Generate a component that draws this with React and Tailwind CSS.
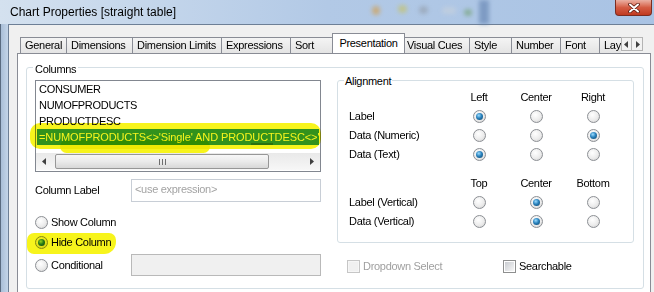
import React from "react";

const tabs = [
  { name: "General", w: "w-[47px]" },
  { name: "Dimensions", w: "w-[67px]" },
  { name: "Dimension Limits", w: "w-[90px]" },
  { name: "Expressions", w: "w-[70px]" },
  { name: "Sort", w: "w-[44px]" },
  { name: "Presentation", w: "w-[69px]", active: true },
  { name: "Visual Cues", w: "w-[68px]" },
  { name: "Style", w: "w-[43px]" },
  { name: "Number", w: "w-[50px]" },
  { name: "Font", w: "w-[40px]" },
  { name: "Layout", w: "w-[50px]" },
];

function Radio({ on }) {
  return (
    <span className="flex h-[13px] w-[13px] shrink-0 items-center justify-center rounded-full border border-[#8c8f94] bg-[radial-gradient(circle_at_40%_35%,#ffffff_0%,#ececec_55%,#cdcdcd_100%)]">
      {on && (
        <span className="h-[7px] w-[7px] rounded-full bg-[radial-gradient(circle_at_40%_35%,#9bdcff_0%,#2a82bd_45%,#0b3f63_100%)]" />
      )}
    </span>
  );
}

function Check({ disabled }) {
  return (
    <span
      className={
        disabled
          ? "flex h-[13px] w-[13px] shrink-0 items-center justify-center border border-[#c6c6c6] bg-[#f6f6f6]"
          : "flex h-[13px] w-[13px] shrink-0 items-center justify-center border border-[#8e8f8f] bg-white"
      }
    >
      <span
        className={
          disabled
            ? "h-[9px] w-[9px] bg-[#f0f0f0]"
            : "h-[9px] w-[9px] bg-gradient-to-br from-[#c9ccd1] to-[#f7f7f7]"
        }
      />
    </span>
  );
}

function Arrow({ dir }) {
  return (
    <svg width="5" height="7" viewBox="0 0 5 7">
      {dir === "left" ? <path d="M4 0 L0 3.5 L4 7 Z" fill="#404040" /> : <path d="M1 0 L5 3.5 L1 7 Z" fill="#404040" />}
    </svg>
  );
}

function TitleBar() {
  return (
    <div className="relative flex h-[24px] items-center bg-gradient-to-r from-[#d4e1ef] via-[#b2c9e6] to-[#a9c3e4] pl-[10px] text-[12px] tracking-normal">
      <span className="relative z-10">Chart Properties [straight table]</span>
      {/* blurred desktop behind the glass */}
      <span className="absolute left-[372px] top-[6px] h-[9px] w-[8px] rounded-full bg-[#d79a3c] opacity-60 blur-[2px]" />
      <span className="absolute left-[398px] top-[5px] h-[8px] w-[9px] rounded-full bg-[#c8c25a] opacity-60 blur-[2px]" />
      <span className="absolute left-[419px] top-[6px] h-[8px] w-[9px] rounded-full bg-[#8c939c] opacity-50 blur-[2px]" />
      <span className="absolute left-[442px] top-[7px] h-[7px] w-[14px] rounded-full bg-[#c9d2dc] opacity-60 blur-[2px]" />
      <span className="absolute left-[464px] top-[9px] h-[7px] w-[8px] rounded-full bg-[#6f9f6a] opacity-60 blur-[2px]" />
      <span className="absolute left-[479px] top-0 h-[24px] w-[10px] bg-[#5f7fae] opacity-60 blur-[2px]" />
      {/* close button */}
      <div className="absolute right-[2px] top-0 flex h-[16px] w-[37px] items-center justify-center rounded-b-[4px] border border-t-0 border-[#7b2c20] bg-gradient-to-b from-[#eab0a3] via-[#d45c43] to-[#c0391f]">
        <svg width="12" height="10" viewBox="0 0 12 10">
          <path d="M2 1.5 L10 8.5 M10 1.5 L2 8.5" stroke="#5a1a10" strokeWidth="3.6" strokeLinecap="round" />
          <path d="M2 1.5 L10 8.5 M10 1.5 L2 8.5" stroke="#ffffff" strokeWidth="2" strokeLinecap="round" />
        </svg>
      </div>
    </div>
  );
}

function Tabs() {
  return (
    <div className="flex h-[20px] w-[634px] items-end">
      <div className="flex h-[20px] w-[604px] items-end overflow-hidden pl-[4px]">
        {tabs.map((t) =>
          t.active ? (
            <div
              key={t.name}
              className="relative z-10 -mx-[2px] mb-[-1px] flex h-[21px] w-[73px] shrink-0 items-center justify-center border border-b-0 border-[#898c95] bg-white pb-[2px]"
            >
              {t.name}
            </div>
          ) : (
            <div
              key={t.name}
              className={`-ml-px flex h-[16px] shrink-0 items-center border border-b-0 border-[#898c95] bg-gradient-to-b from-[#f4f4f4] to-[#e4e4e4] pl-[4px] ${t.w}`}
            >
              {t.name}
            </div>
          )
        )}
      </div>
      <div className="mb-[2px] flex h-[14px]">
        <div className="flex w-[11px] items-center justify-center border border-[#b4b4b4] bg-[#f2f2f2]">
          <Arrow dir="left" />
        </div>
        <div className="flex w-[11px] items-center justify-center border border-l-0 border-[#b4b4b4] bg-[#f2f2f2]">
          <Arrow dir="right" />
        </div>
      </div>
    </div>
  );
}

function ListBox() {
  return (
    <div className="flex h-[92px] flex-col border border-[#828790] bg-white">
      <div className="h-[16px] pl-[3px] leading-[16px]">CONSUMER</div>
      <div className="h-[16px] pl-[3px] leading-[16px]">NUMOFPRODUCTS</div>
      <div className="h-[16px] pl-[3px] leading-[16px]">PRODUCTDESC</div>
      <div className="relative mx-[1px] h-[16px] overflow-hidden whitespace-nowrap bg-[#3399ff] pl-[2px] leading-[16px] tracking-[-0.1px] text-white">
        =NUMOFPRODUCTS&lt;&gt;'Single' AND PRODUCTDESC&lt;&gt;'
        <span className="absolute left-[214px] top-[14px] h-[2px] w-[22px] bg-[#2b7686]" />
      </div>
      <div className="h-[8px]" />
      <div className="flex h-[17px] items-center bg-gradient-to-b from-[#e9e9e9] to-[#f7f7f7]">
        <div className="flex h-[17px] w-[17px] items-center justify-center">
          <Arrow dir="left" />
        </div>
        <div className="ml-[2px] flex h-[15px] w-[214px] items-center justify-center gap-[2px] rounded-[2px] border border-[#979797] bg-gradient-to-b from-[#f7f7f7] via-[#ebebeb] to-[#d8d8d8]">
          <span className="h-[6px] w-px bg-[#6e6e6e]" />
          <span className="h-[6px] w-px bg-[#6e6e6e]" />
          <span className="h-[6px] w-px bg-[#6e6e6e]" />
        </div>
        <div className="flex-1" />
        <div className="flex h-[17px] w-[17px] items-center justify-center">
          <Arrow dir="right" />
        </div>
      </div>
    </div>
  );
}

function ColumnsSide() {
  return (
    <div className="relative w-[286px]">
      <ListBox />
      <div className="mt-[7px] flex h-[23px] items-center">
        <span className="w-[96px]">Column Label</span>
        <div className="flex h-[23px] w-[190px] items-center border border-[#c8ced6] bg-white pl-[3px] pb-[2px] text-[#a3a3a3]">
          &lt;use expression&gt;
        </div>
      </div>
      <div className="mt-[12px] flex h-[16px] items-center gap-[3px]">
        <Radio />
        <span>Show Column</span>
      </div>
      <div className="mt-[4px] flex h-[16px] items-center gap-[3px]">
        <Radio on />
        <span>Hide Column</span>
      </div>
      <div className="mt-[4px] flex h-[22px] items-center">
        <div className="flex w-[96px] items-center gap-[3px]">
          <Radio />
          <span>Conditional</span>
        </div>
        <div className="h-[22px] w-[190px] border border-[#b9b9b9] bg-[#f0f0f0]" />
      </div>
      {/* yellow highlighter marks */}
      <span className="pointer-events-none absolute left-[-5px] top-[43px] h-[26px] w-[291px] rounded-[10px] bg-[#f7f41c] mix-blend-multiply" />
      <span className="pointer-events-none absolute left-[25px] top-[60px] h-[13px] w-[150px] rounded-full bg-[#f7f41c] mix-blend-multiply" />
      <span className="pointer-events-none absolute left-[-8px] top-[153px] h-[21px] w-[89px] rounded-[7px] rounded-br-[12px] bg-[#f7f41c] mix-blend-multiply" />
    </div>
  );
}

function AlignmentSide() {
  return (
    <div className="w-[297px]">
      <div className="relative h-[163px] rounded-[3px] border border-[#d5dfe5] pl-[11px] pt-[7px]">
        <span className="absolute left-[6px] top-[-7px] bg-white px-[1px] leading-[14px]">Alignment</span>
        <div className="grid grid-cols-[102px_56px_58px_56px] auto-rows-[19px] items-center">
          <span />
          <span className="justify-self-center">Left</span>
          <span className="justify-self-center">Center</span>
          <span className="justify-self-center">Right</span>

          <span>Label</span>
          <span className="justify-self-center"><Radio on /></span>
          <span className="justify-self-center"><Radio /></span>
          <span className="justify-self-center"><Radio /></span>

          <span>Data (Numeric)</span>
          <span className="justify-self-center"><Radio /></span>
          <span className="justify-self-center"><Radio /></span>
          <span className="justify-self-center"><Radio on /></span>

          <span>Data (Text)</span>
          <span className="justify-self-center"><Radio on /></span>
          <span className="justify-self-center"><Radio /></span>
          <span className="justify-self-center"><Radio /></span>
        </div>
        <div className="mt-[10px] grid grid-cols-[102px_56px_58px_56px] auto-rows-[19px] items-center">
          <span />
          <span className="justify-self-center">Top</span>
          <span className="justify-self-center">Center</span>
          <span className="justify-self-center">Bottom</span>

          <span>Label (Vertical)</span>
          <span className="justify-self-center"><Radio /></span>
          <span className="justify-self-center"><Radio on /></span>
          <span className="justify-self-center"><Radio /></span>

          <span>Data (Vertical)</span>
          <span className="justify-self-center"><Radio /></span>
          <span className="justify-self-center"><Radio on /></span>
          <span className="justify-self-center"><Radio /></span>
        </div>
      </div>
      <div className="mt-[16px] flex h-[14px] items-center pl-[10px]">
        <div className="flex w-[156px] items-center gap-[3px] text-[#a0a0a0]">
          <Check disabled />
          <span>Dropdown Select</span>
        </div>
        <div className="flex items-center gap-[3px]">
          <Check />
          <span>Searchable</span>
        </div>
      </div>
    </div>
  );
}

export default function App() {
  return (
    <div className="relative h-[292px] w-[654px] overflow-hidden bg-[#b4c8df] font-['Liberation_Sans',Arial,sans-serif] text-[11px] tracking-[-0.3px] text-black">
      <TitleBar />
      <div className="flex">
        <div className="h-[268px] w-[8px] border-l border-[#5a6b80] bg-gradient-to-r from-[#a9bed7] to-[#c4d5e9]" />
        <div className="h-[268px] flex-1 border-l border-t border-[#6d7f96] bg-[#f0f0f0] pl-[8px] pt-[8px]">
          <Tabs />
          <div className="h-[245px] w-[634px] border border-[#898c95] bg-white pl-[8px] pt-[13px]">
            <div className="relative flex h-[222px] w-[618px] gap-[16px] rounded-[3px] border border-[#d5dfe5] pl-[8px] pt-[12px]">
              <span className="absolute left-[6px] top-[-6px] bg-white px-[2px] leading-[14px]">Columns</span>
              <ColumnsSide />
              <AlignmentSide />
            </div>
          </div>
        </div>
      </div>
    </div>
  );
}
